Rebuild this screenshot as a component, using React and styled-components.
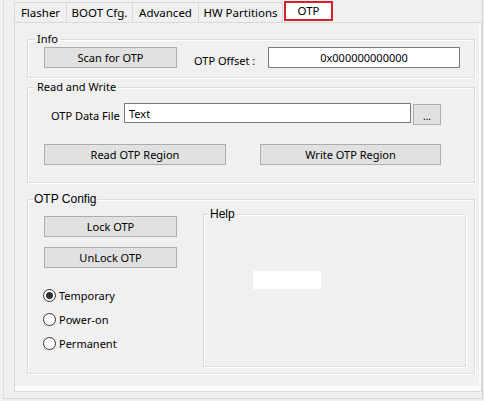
import React, { useState } from 'react';
import styled, { createGlobalStyle } from 'styled-components';

const GlobalStyle = createGlobalStyle`
  html, body {
    margin: 0;
    padding: 0;
    background: #f0f0f0;
  }
  body {
    font-family: 'Noto Sans', 'Segoe UI', sans-serif;
    font-size: 11px;
    color: #000;
  }
`;

const tabs = ['Flasher', 'BOOT Cfg.', 'Advanced', 'HW Partitions', 'OTP'];
const tabWidths = [53, 66, 66, 84, 49];

const App = () => {
  const [mode, setMode] = useState('temporary');

  return (
    <>
      <GlobalStyle />
      <Window>
        <Frame>
          <TabStrip>
            {tabs.map((t, i) => (
              <Tab key={t} $w={tabWidths[i]} $first={i === 0} $active={t === 'OTP'}>
                {t}
              </Tab>
            ))}
          </TabStrip>
          <Panel>
            <Info>
              <Legend>Info</Legend>
              <InfoRow>
                <Button $w={133}>Scan for OTP</Button>
                <FieldLabel>OTP Offset :</FieldLabel>
                <TextBox $w={192} $center value='0x000000000000' readOnly />
              </InfoRow>
            </Info>

            <ReadWrite>
              <Legend>Read and Write</Legend>
              <FileRow>
                <FileLabel>OTP Data File</FileLabel>
                <TextBox $w={287} $h={20} value='Text' readOnly />
                <BrowseButton>...</BrowseButton>
              </FileRow>
              <ButtonRow>
                <Button $w={182}>Read OTP Region</Button>
                <Button $w={181}>Write OTP Region</Button>
              </ButtonRow>
            </ReadWrite>

            <Config>
              <ClassicLegend>OTP Config</ClassicLegend>
              <ConfigBody>
                <LeftColumn>
                  <Button $w={133}>Lock OTP</Button>
                  <Button $w={133}>UnLock OTP</Button>
                  <RadioList>
                    {[
                      ['temporary', 'Temporary'],
                      ['poweron', 'Power-on'],
                      ['permanent', 'Permanent'],
                    ].map(([key, label]) => (
                      <RadioRow key={key}>
                        <Radio
                          type='radio'
                          name='otp-mode'
                          checked={mode === key}
                          onChange={() => setMode(key)}
                        />
                        {label}
                      </RadioRow>
                    ))}
                  </RadioList>
                </LeftColumn>
                <Help>
                  <ClassicLegend>Help</ClassicLegend>
                  <HelpBlank />
                </Help>
              </ConfigBody>
            </Config>
          </Panel>
        </Frame>
      </Window>
    </>
  );
};

export default App;

const Window = styled.div`
  width: 484px;
  height: 401px;
  box-sizing: border-box;
  padding: 0 1px 2px 3px;
`;

const Frame = styled.div`
  height: 100%;
  box-sizing: border-box;
  border-left: 1px solid #dcdcdc;
  border-right: 1px solid #d4d4d4;
  border-bottom: 1px solid #d4d4d4;
  padding: 0 0 6px 10px;
  display: flex;
  flex-direction: column;
`;

const TabStrip = styled.div`
  display: flex;
  height: 22px;
  align-items: flex-end;
`;

const Tab = styled.div`
  width: ${(p) => p.$w}px;
  box-sizing: border-box;
  height: 20px;
  margin-bottom: ${(p) => (p.$active ? '1px' : '0')};
  margin-left: ${(p) => (p.$active ? '1px' : '0')};
  display: flex;
  align-items: center;
  justify-content: center;
  background: ${(p) => (p.$active ? '#fff' : '#f0f0f0')};
  border-top: 1px solid #d9d9d9;
  border-right: 1px solid #d9d9d9;
  border-left: ${(p) => (p.$first ? '1px solid #d9d9d9' : 'none')};
  ${(p) => p.$active && 'border: 2px solid #d4202a;'}
  font-size: 11.5px;
  padding-bottom: 1px;
`;

const Panel = styled.div`
  flex: 1;
  border: 1px solid #d9d9d9;
  background: #f0f0f0;
  box-shadow: inset -2px -5px 0 #fcfcfc;
  padding: 16px 7px 0 12px;
  display: flex;
  flex-direction: column;
`;

const Group = styled.div`
  border: 1px solid #dcdcdc;
  box-shadow: 1px 1px 0 #fff, inset 1px 1px 0 #fff;
  width: 448px;
  box-sizing: border-box;
`;

const Legend = styled.div`
  margin: -9px 0 0 7px;
  padding: 0 2px;
  width: fit-content;
  height: 16px;
  line-height: 16px;
  background: #f0f0f0;
  font-size: 11px;
`;

const ClassicLegend = styled(Legend)`
  font-family: 'Liberation Sans', Arial, sans-serif;
  font-size: 12px;
  margin-left: 5px;
  padding: 0 1px;
`;

const Info = styled(Group)``;

const InfoRow = styled.div`
  display: flex;
  align-items: flex-start;
  padding: 0 14px 8px 16px;
`;

const Button = styled.button`
  width: ${(p) => p.$w}px;
  height: 21px;
  box-sizing: border-box;
  background: #e1e1e1;
  border: 1px solid #adadad;
  font-family: 'Noto Sans', 'Segoe UI', sans-serif;
  font-size: 11px;
  color: #000;
  padding: 0;
  margin: 0;
`;

const FieldLabel = styled.span`
  margin: 6px 0 0 17px;
  line-height: 16px;
  font-size: 11px;
`;

const TextBox = styled.input`
  width: ${(p) => p.$w}px;
  height: ${(p) => p.$h || 21}px;
  box-sizing: border-box;
  border: 1px solid #7a7a7a;
  background: #fff;
  font-family: 'Noto Sans', 'Segoe UI', sans-serif;
  font-size: 11px;
  color: #000;
  padding: 0 4px;
  margin: 0 0 0 auto;
  text-align: ${(p) => (p.$center ? 'center' : 'left')};
  outline: none;
`;

const ReadWrite = styled(Group)`
  margin-top: 9px;
`;

const FileRow = styled.div`
  display: flex;
  align-items: flex-start;
  margin-top: 8px;
  padding-left: 23px;
  & > input {
    margin: 0;
  }
`;

const FileLabel = styled.span`
  width: 73px;
  margin-top: 5px;
  line-height: 16px;
  font-size: 11px;
`;

const BrowseButton = styled(Button)`
  width: 28px;
  margin: 1px 0 0 2px;
  font-size: 10px;
  padding-top: 2px;
`;

const ButtonRow = styled.div`
  display: flex;
  gap: 34px;
  margin-top: 19px;
  padding: 0 0 17px 16px;
`;

const Config = styled(Group)`
  margin-top: 16px;
`;

const ConfigBody = styled.div`
  display: flex;
  align-items: flex-start;
  padding-bottom: 6px;
`;

const LeftColumn = styled.div`
  display: flex;
  flex-direction: column;
  gap: 10px;
  padding: 9px 0 0 16px;
`;

const RadioList = styled.div`
  display: flex;
  flex-direction: column;
  gap: 4px;
  margin-top: 7px;
`;

const RadioRow = styled.label`
  display: flex;
  align-items: center;
  height: 20px;
  font-size: 11px;
  margin-left: -1px;
`;

const Radio = styled.input`
  appearance: none;
  width: 13px;
  height: 13px;
  margin: 0 3px 0 0;
  border: 1px solid #333;
  border-radius: 50%;
  background: #fff;
  display: grid;
  place-items: center;
  &:checked::after {
    content: '';
    width: 7px;
    height: 7px;
    border-radius: 50%;
    background: #333;
  }
`;

const Help = styled(Group)`
  width: 263px;
  height: 153px;
  margin: 7px 0 0 26px;
`;

const HelpBlank = styled.div`
  width: 68px;
  height: 18px;
  background: #fff;
  margin: 49px 0 0 49px;
`;
